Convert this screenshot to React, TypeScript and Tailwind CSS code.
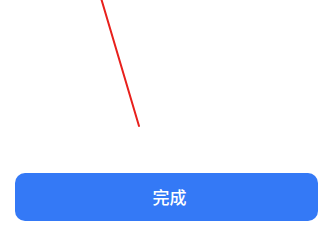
import React from 'react';

export default function App() {
  return (
    <div className="relative w-[320px] h-[240px] bg-white overflow-hidden" style={{ fontFamily: '"Noto Sans CJK SC", "Liberation Sans", sans-serif' }}>
      {/* red annotation stroke */}
      <svg className="absolute left-0 top-0" width="320" height="240" viewBox="0 0 320 240">
        <line x1="101" y1="-2" x2="139" y2="126" stroke="#e8201c" strokeWidth="2" strokeLinecap="round" />
      </svg>

      <div className="flex flex-col h-full pt-[173px] pl-[15px] pr-[2px]">
        <button className="h-[48px] w-full rounded-[10px] bg-[#3479f6] text-white text-[17px] font-medium flex items-center justify-center pl-[6px]">
          完成
        </button>
      </div>
    </div>
  );
}
